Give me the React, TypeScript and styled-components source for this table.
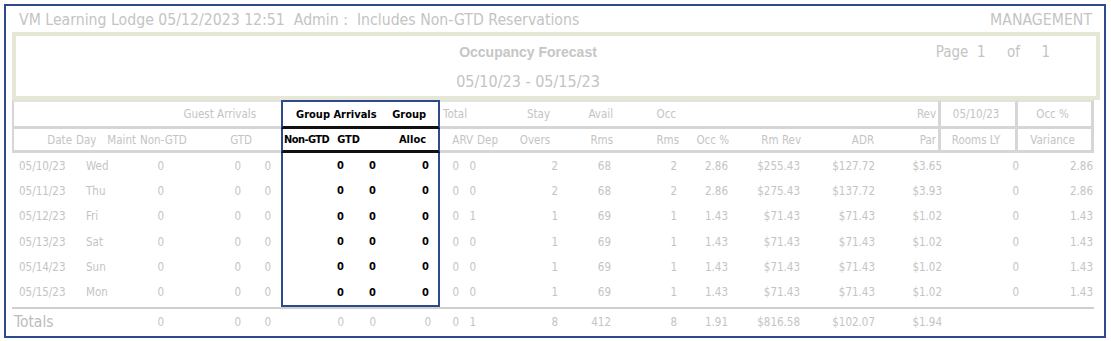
import React from "react";
import styled, { createGlobalStyle } from "styled-components";

const FONT = `"DejaVu Sans Condensed", "DejaVu Sans", sans-serif`;
const GRAY = "#c4c4c4";
const BLUE = "#2d4b8c";
const RULE = "#d6d6d6";

const GlobalStyle = createGlobalStyle`
  body {
    margin: 0;
    background: #ffffff;
  }
`;

const Frame = styled.div`
  margin: 4px 0 0 4px;
  width: 1102px;
  height: 334px;
  box-sizing: border-box;
  border: 2px solid ${BLUE};
  padding: 0 4px 0 6px;
  font-family: ${FONT};
  color: ${GRAY};
  overflow: hidden;
`;

const TitleBar = styled.div`
  height: 26px;
  display: flex;
  align-items: center;
  justify-content: space-between;
  padding: 0 8px 0 7px;
  font-size: 15.7px;
  white-space: pre;
`;

const ReportBox = styled.div`
  width: 1088px;
  height: 68px;
  box-sizing: border-box;
  border: 4px solid #e7e7d5;
  display: grid;
  grid-template-columns: 424px 176px 1fr;
  padding-top: 7px;
`;

const ReportTitle = styled.div`
  grid-column: 2;
  text-align: center;
`;

const ReportName = styled.div`
  font-family: "Liberation Sans", Arial, sans-serif;
  font-weight: bold;
  font-size: 14px;
  line-height: 18px;
  color: #c6c6c6;
`;

const ReportRange = styled.div`
  margin-top: 11px;
  font-size: 16px;
  line-height: 20px;
  white-space: pre;
`;

const PageInfo = styled.div`
  justify-self: end;
  padding-right: 46px;
  font-size: 15px;
  line-height: 18px;
  white-space: pre;
`;

const Table = styled.table`
  width: 1082px;
  table-layout: fixed;
  border-collapse: separate;
  border-spacing: 0;
  font-size: 11.5px;
  white-space: nowrap;
`;

type Align = "left" | "right" | "center";
type Group = "first" | "mid" | "last";

interface CellProps {
  $align?: Align;
  $padL?: number;
  $padR?: number;
  $group?: Group;
  $boxed?: boolean;
  $lead?: boolean;
  $top?: boolean;
  $tight?: boolean;
}

const HeadCell = styled.th<CellProps>`
  font-weight: ${(p) => (p.$group ? "bold" : "normal")};
  font-size: ${(p) => (p.$group ? 11 : 11.5)}px;
  letter-spacing: ${(p) => (p.$tight ? "-0.6px" : "normal")};
  color: ${(p) => (p.$group ? "#000" : GRAY)};
  text-align: ${(p) => p.$align ?? "right"};
  padding: 0 ${(p) => p.$padR ?? 4}px 0 ${(p) => p.$padL ?? 0}px;
  height: ${(p) => (p.$top ? 24 : 21)}px;
  overflow: visible;
  border-top: ${(p) => (p.$top ? `2px solid ${p.$group ? BLUE : "#e2e2e2"}` : "none")};
  border-bottom: 3px solid ${(p) => (p.$group ? "#111" : RULE)};
  border-left: ${(p) =>
    p.$group === "first" ? `2px solid ${BLUE}` : p.$lead ? `2px solid ${RULE}` : "none"};
  border-right: ${(p) =>
    p.$group === "last" ? `2px solid ${BLUE}` : p.$boxed ? `3px solid ${RULE}` : "none"};
`;

interface DataProps {
  $align?: Align;
  $padL?: number;
  $padR?: number;
  $group?: Group;
  $last?: boolean;
  $total?: boolean;
  $big?: boolean;
}

const DataCell = styled.td<DataProps>`
  height: ${(p) => (p.$total ? 27 : 25.3)}px;
  padding: 0 ${(p) => p.$padR ?? 4}px 0 ${(p) => p.$padL ?? 0}px;
  text-align: ${(p) => p.$align ?? "right"};
  vertical-align: middle;
  font-size: ${(p) => (p.$big ? 15.5 : p.$group && !p.$total ? 11 : 11.5)}px;
  font-weight: ${(p) => (p.$group && !p.$total ? "bold" : "normal")};
  color: ${(p) => (p.$group && !p.$total ? "#000" : p.$big ? "#bcbcbc" : GRAY)};
  border-left: ${(p) => (p.$group === "first" && !p.$total ? `2px solid ${BLUE}` : "none")};
  border-right: ${(p) => (p.$group === "last" && !p.$total ? `2px solid ${BLUE}` : "none")};
  border-bottom: ${(p) =>
    p.$last ? `2px solid ${p.$group ? BLUE : "transparent"}` : "none"};
  border-top: ${(p) => (p.$total ? "2px solid #cfcfcf" : "none")};
`;

const headWidths = [64, 24, 40, 48, 68, 25, 52, 31, 76, 37, 24, 53, 63, 66, 50, 72, 73, 63, 77, 76];
const dataWidths = [64, 54, 38, 77, 36, 67, 32, 60, 25, 17, 80, 53, 72, 45, 72, 75, 67, 79, 69];

interface ColSpec {
  align: Align;
  padL?: number;
  padR?: number;
  group?: Group;
}

const dataCols: ColSpec[] = [
  { align: "left", padL: 7 },
  { align: "left", padL: 10 },
  { align: "right" },
  { align: "right" },
  { align: "right", padR: 10 },
  { align: "right", group: "first" },
  { align: "right", group: "mid" },
  { align: "right", padR: 9, group: "last" },
  { align: "right", padR: 6 },
  { align: "right", padR: 6 },
  { align: "right" },
  { align: "right" },
  { align: "right", padR: 10 },
  { align: "right" },
  { align: "right" },
  { align: "right" },
  { align: "right" },
  { align: "right", padR: 6 },
  { align: "right", padR: 1 },
];

const rows: string[][] = [
  ["05/10/23", "Wed", "0", "0", "0", "0", "0", "0", "0", "0", "2", "68", "2", "2.86", "$255.43", "$127.72", "$3.65", "0", "2.86"],
  ["05/11/23", "Thu", "0", "0", "0", "0", "0", "0", "0", "0", "2", "68", "2", "2.86", "$275.43", "$137.72", "$3.93", "0", "2.86"],
  ["05/12/23", "Fri", "0", "0", "0", "0", "0", "0", "0", "1", "1", "69", "1", "1.43", "$71.43", "$71.43", "$1.02", "0", "1.43"],
  ["05/13/23", "Sat", "0", "0", "0", "0", "0", "0", "0", "0", "1", "69", "1", "1.43", "$71.43", "$71.43", "$1.02", "0", "1.43"],
  ["05/14/23", "Sun", "0", "0", "0", "0", "0", "0", "0", "0", "1", "69", "1", "1.43", "$71.43", "$71.43", "$1.02", "0", "1.43"],
  ["05/15/23", "Mon", "0", "0", "0", "0", "0", "0", "0", "0", "1", "69", "1", "1.43", "$71.43", "$71.43", "$1.02", "0", "1.43"],
];

const totals = ["Totals", "", "0", "0", "0", "0", "0", "0", "0", "1", "8", "412", "8", "1.91", "$816.58", "$102.07", "$1.94", "", ""];

const Cols: React.FC<{ widths: number[] }> = ({ widths }) => (
  <colgroup>
    {widths.map((w, i) => (
      <col key={i} style={{ width: w }} />
    ))}
  </colgroup>
);

const App: React.FC = () => {
  return (
    <>
      <GlobalStyle />
      <Frame>
        <TitleBar>
          <span>VM Learning Lodge 05/12/2023 12:51  Admin :  Includes Non-GTD Reservations</span>
          <span>MANAGEMENT</span>
        </TitleBar>

        <ReportBox>
          <ReportTitle>
            <ReportName>Occupancy Forecast</ReportName>
            <ReportRange>05/10/23 - 05/15/23</ReportRange>
          </ReportTitle>
          <PageInfo>Page  1     of     1</PageInfo>
        </ReportBox>

        <Table>
          <Cols widths={headWidths} />
          <thead>
            <tr>
              <HeadCell $top $lead colSpan={5} $padR={0}>
                Guest Arrivals
              </HeadCell>
              <HeadCell $top />
              <HeadCell $top $group="first" colSpan={2} $align="left" $padL={13}>
                Group Arrivals
              </HeadCell>
              <HeadCell $top $group="last" $padR={12}>
                Group
              </HeadCell>
              <HeadCell $top colSpan={2} $align="left" $padL={3}>
                Total
              </HeadCell>
              <HeadCell $top>Stay</HeadCell>
              <HeadCell $top>Avail</HeadCell>
              <HeadCell $top $padR={7}>
                Occ
              </HeadCell>
              <HeadCell $top colSpan={3} />
              <HeadCell $top $boxed $padR={2}>
                Rev
              </HeadCell>
              <HeadCell $top $boxed $align="center">
                05/10/23
              </HeadCell>
              <HeadCell $top $boxed $align="center">
                Occ %
              </HeadCell>
            </tr>
            <tr>
              <HeadCell $lead>Date</HeadCell>
              <HeadCell>Day</HeadCell>
              <HeadCell>Maint</HeadCell>
              <HeadCell>Non-GTD</HeadCell>
              <HeadCell>GTD</HeadCell>
              <HeadCell />
              <HeadCell $group="first" $padR={4} $tight>
                Non-GTD
              </HeadCell>
              <HeadCell $group="mid">GTD</HeadCell>
              <HeadCell $group="last" $padR={12}>
                Alloc
              </HeadCell>
              <HeadCell>ARV</HeadCell>
              <HeadCell>Dep</HeadCell>
              <HeadCell>Overs</HeadCell>
              <HeadCell>Rms</HeadCell>
              <HeadCell>Rms</HeadCell>
              <HeadCell>Occ %</HeadCell>
              <HeadCell>Rm Rev</HeadCell>
              <HeadCell>ADR</HeadCell>
              <HeadCell $boxed $padR={2}>
                Par
              </HeadCell>
              <HeadCell $boxed $align="center">
                Rooms LY
              </HeadCell>
              <HeadCell $boxed $align="center">
                Variance
              </HeadCell>
            </tr>
          </thead>
        </Table>

        <Table>
          <Cols widths={dataWidths} />
          <tbody>
            {rows.map((row, r) => (
              <tr key={row[0]}>
                {row.map((v, c) => (
                  <DataCell
                    key={c}
                    $align={dataCols[c].align}
                    $padL={dataCols[c].padL}
                    $padR={dataCols[c].padR}
                    $group={dataCols[c].group}
                    $last={r === rows.length - 1}
                  >
                    {v}
                  </DataCell>
                ))}
              </tr>
            ))}
            <tr>
              {totals.map((v, c) => (
                <DataCell
                  key={c}
                  $total
                  $big={c === 0}
                  $align={dataCols[c].align}
                  $padL={c === 0 ? 2 : dataCols[c].padL}
                  $padR={dataCols[c].padR}
                  $group={dataCols[c].group}
                >
                  {v}
                </DataCell>
              ))}
            </tr>
          </tbody>
        </Table>
      </Frame>
    </>
  );
};

export default App;
